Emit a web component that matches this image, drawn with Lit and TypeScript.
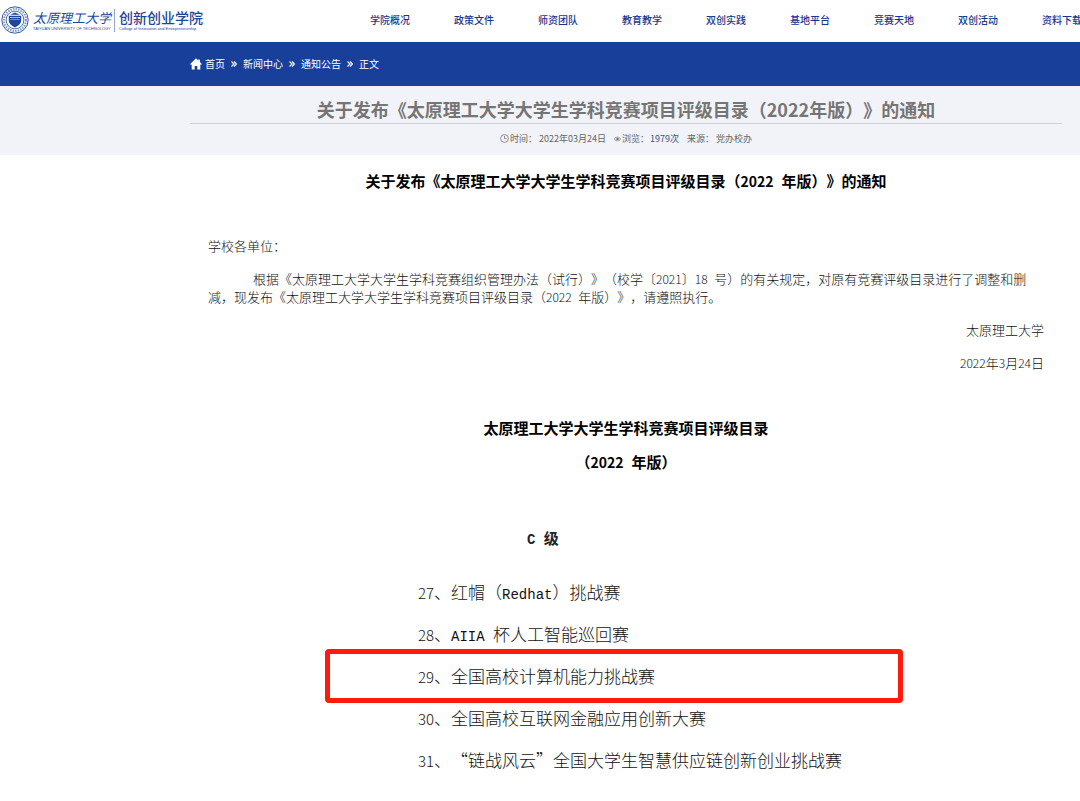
import { LitElement, html, css } from "lit";
import { customElement } from "lit/decorators.js";

const NAV = ["学院概况", "政策文件", "师资团队", "教育教学", "双创实践", "基地平台", "竞赛天地", "双创活动", "资料下载"];
const CRUMBS = ["首页", "新闻中心", "通知公告"];
const ITEMS = [
  { no: 27, name: "红帽（Redhat）挑战赛" },
  { no: 28, name: "AIIA 杯人工智能巡回赛" },
  { no: 29, name: "全国高校计算机能力挑战赛", marked: true },
  { no: 30, name: "全国高校互联网金融应用创新大赛" },
  { no: 31, name: "“链战风云”全国大学生智慧供应链创新创业挑战赛" },
];

// Digits and Latin letters take half the width of a Chinese character.
const mixed = (text: string) =>
  text
    .split(/([0-9]+|[A-Za-z ]+)/)
    .map((part, i) => (i % 2 ? html`<span class=${/\d/.test(part) ? "num" : "half"}>${part}</span>` : part));

const emblem = html`<svg class="emblem" viewBox="0 0 28 28" aria-hidden="true">
  <g fill="none" stroke="#1d469c">
    <circle cx="14" cy="14" r="13.2" stroke-width="0.9" />
    <circle cx="14" cy="14" r="11" stroke-width="2.2" stroke-dasharray="1.5 1.1" opacity="0.55" />
    <circle cx="14" cy="14" r="8.9" stroke-width="0.8" />
  </g>
  <path fill="#1d469c" d="M7.8 9.8h12.4v4.2c0 3.6-2.6 5.8-6.2 7.4-3.6-1.6-6.2-3.8-6.2-7.4z" />
  <path fill="#fff" d="M9 11.3h10v.8H9zM9.2 13.6h9.6v.5H9.2z" opacity="0.8" />
  <path fill="#1d469c" d="M9 8.8l5-2.4 5 2.4z" />
</svg>`;

const homeIcon = html`<svg class="home" viewBox="0 0 12 12" aria-hidden="true">
  <path fill="#fff" d="M6 .3 8.4 2.6V1.4h1.5v2.7L11.8 6l-.8.9-.7-.6v5.2H7.3V8H4.7v3.5H1.7V6.3L1 6.9.2 6z" />
</svg>`;

const clockIcon = html`<svg class="clock" viewBox="0 0 9 9" aria-hidden="true">
  <circle cx="4.5" cy="4.5" r="3.9" fill="none" stroke="#777" stroke-width="0.8" />
  <path d="M4.5 2v2.7h2.1" fill="none" stroke="#777" stroke-width="0.8" />
</svg>`;

const eyeIcon = html`<svg class="eye" viewBox="0 0 8 6" aria-hidden="true">
  <path d="M.4 3C2 .2 6 .2 7.6 3 6 5.8 2 5.8.4 3z" fill="none" stroke="#777" stroke-width="0.8" />
  <circle cx="4" cy="3" r="1.5" fill="#777" />
</svg>`;

const chevrons = html`<svg class="sep" viewBox="0 0 6 6" aria-hidden="true">
  <path d="M.5.5 3 3 .5 5.5M3 .5 5.5 3 3 5.5" fill="none" stroke="#fff" stroke-width="1.1" />
</svg>`;

@customElement("app-root")
export class AppRoot extends LitElement {
  static styles = css`
    :host {
      display: block;
      min-height: 100vh;
      overflow: hidden;
      background: #fff;
      color: #111;
      font-family: "Noto Sans CJK SC", sans-serif;
      text-spacing-trim: space-all;
    }
    * { box-sizing: border-box; }
    h1, h2, h3, p, ul { margin: 0; padding: 0; list-style: none; }
    a { color: inherit; text-decoration: none; white-space: nowrap; }
    svg { display: block; flex: none; }

    .header { display: flex; align-items: center; height: 42px; overflow: hidden; }
    .logo { display: flex; flex: none; align-items: center; width: 370px; padding: 0 0 2px 1px; color: #1d469c; }
    .emblem { width: 28px; height: 28px; }
    .brand { display: flex; flex-direction: column; }
    .university { padding: 0 3px 0 4px; }
    .college { padding-left: 4px; border-left: 1px solid #8fa5cf; }
    .name { font-size: 14px; line-height: 17px; font-weight: 500; }
    .university .name { font-size: 13px; font-style: italic; font-weight: 400; }
    .latin { font-family: "Liberation Sans", sans-serif; font-size: 4px; line-height: 6px; white-space: nowrap; }
    .nav { display: flex; gap: 44px; padding-bottom: 2px; color: #14388c; font-size: 10px; line-height: 16px; font-weight: 500; }

    .crumbbar { padding: 0 18px 0 190px; background: #18409b; color: #fff; }
    .crumbs { display: flex; align-items: center; gap: 6px; height: 44px; font-size: 10px; line-height: 16px; }
    .home { width: 12px; height: 12px; }
    .first { display: flex; align-items: center; gap: 3px; }
    .sep { width: 6px; height: 6px; }

    .banner { padding: 10px 18px 8px 190px; background: #f2f3f8; text-align: center; }
    .title { border-bottom: 1px solid #cfd1d6; color: #757575; font-size: 18px; line-height: 27px; font-weight: 700; white-space: nowrap; }
    .meta { display: flex; justify-content: center; align-items: center; gap: 8px; padding-top: 6px; color: #666; font-size: 9px; line-height: 17px; }
    .meta span { display: flex; align-items: center; gap: 1px; }
    .clock { width: 9px; height: 9px; }
    .eye { width: 7px; height: 6px; }
    .meta .count { color: #3c4f8c; }

    .article { padding: 0 36px 0 208px; }
    .half { font-family: "Liberation Mono", monospace; line-height: 1; white-space: pre; }
    .num { line-height: 1; }

    .heading { color: #000; font-size: 15px; line-height: 34px; font-weight: 700; text-align: center; }
    .heading .half { font-size: 13px; }
    .heading .num { font-size: 14px; }
    .notice { padding-top: 9px; }
    .body { padding-top: 32px; font-size: 13px; font-weight: 300; }
    .body .half { font-size: 11px; }
    .body .num { font-size: 12px; }
    .line { padding: 7px 0 8px; line-height: 18px; }
    .indent { text-indent: 45px; }
    .right { text-align: right; }
    .catalogue { padding-top: 31px; }

    .grade { max-width: 578px; margin: 38px 0 0 117px; font-size: 17px; line-height: 42px; font-weight: 300; }
    .grade .half { font-size: 14px; }
    .grade .num { font-size: 15px; }
    .level { padding-left: 202px; font-size: 15px; font-weight: 700; color: #222; }
    .items { padding-top: 12px; }
    .item { padding-left: 93px; white-space: nowrap; }
    .marked { margin: -6px 0; padding: 1px 0 1px 88px; border: 5px solid #fe1b0c; border-radius: 4px; }
  `;

  render() {
    return html`
      <header class="header">
        <a class="logo" href="#">
          ${emblem}
          <span class="brand university"><span class="name">太原理工大学</span><span class="latin">TAIYUAN UNIVERSITY OF TECHNOLOGY</span></span>
          <span class="brand college"><span class="name">创新创业学院</span><span class="latin">College of Innovation and Entrepreneurship</span></span>
        </a>
        <nav class="nav">${NAV.map((n) => html`<a href="#">${n}</a>`)}</nav>
      </header>
      <div class="crumbbar">
        <nav class="crumbs">
          ${CRUMBS.map((c, i) => html`<a class=${i ? "" : "first"} href="#">${i ? "" : homeIcon}${c}</a>${chevrons}`)}
          <span>正文</span>
        </nav>
      </div>
      <div class="banner">
        <h1 class="title">关于发布《太原理工大学大学生学科竞赛项目评级目录（2022年版）》的通知</h1>
        <div class="meta">
          <span>${clockIcon}时间： 2022年03月24日</span>
          <span>${eyeIcon}浏览：<span class="count">1979次</span></span>
          <span>来源： 党办校办</span>
        </div>
      </div>
      <main class="article">
        <h2 class="heading notice">${mixed("关于发布《太原理工大学大学生学科竞赛项目评级目录（2022 年版）》的通知")}</h2>
        <div class="body">
          <p class="line">学校各单位：</p>
          <p class="line indent">${mixed("根据《太原理工大学大学生学科竞赛组织管理办法（试行）》（校学〔2021〕18 号）的有关规定，对原有竞赛评级目录进行了调整和删减，现发布《太原理工大学大学生学科竞赛项目评级目录（2022 年版）》，请遵照执行。")}</p>
          <p class="line right">太原理工大学</p>
          <p class="line right">${mixed("2022年3月24日")}</p>
        </div>
        <div class="catalogue">
          <h2 class="heading">太原理工大学大学生学科竞赛项目评级目录</h2>
          <h2 class="heading">${mixed("（2022 年版）")}</h2>
        </div>
        <section class="grade">
          <h3 class="level">${mixed("C 级")}</h3>
          <ul class="items">
            ${ITEMS.map((it) => html`<li class="item ${it.marked ? "marked" : ""}">${mixed(`${it.no}、${it.name}`)}</li>`)}
          </ul>
        </section>
      </main>
    `;
  }
}
